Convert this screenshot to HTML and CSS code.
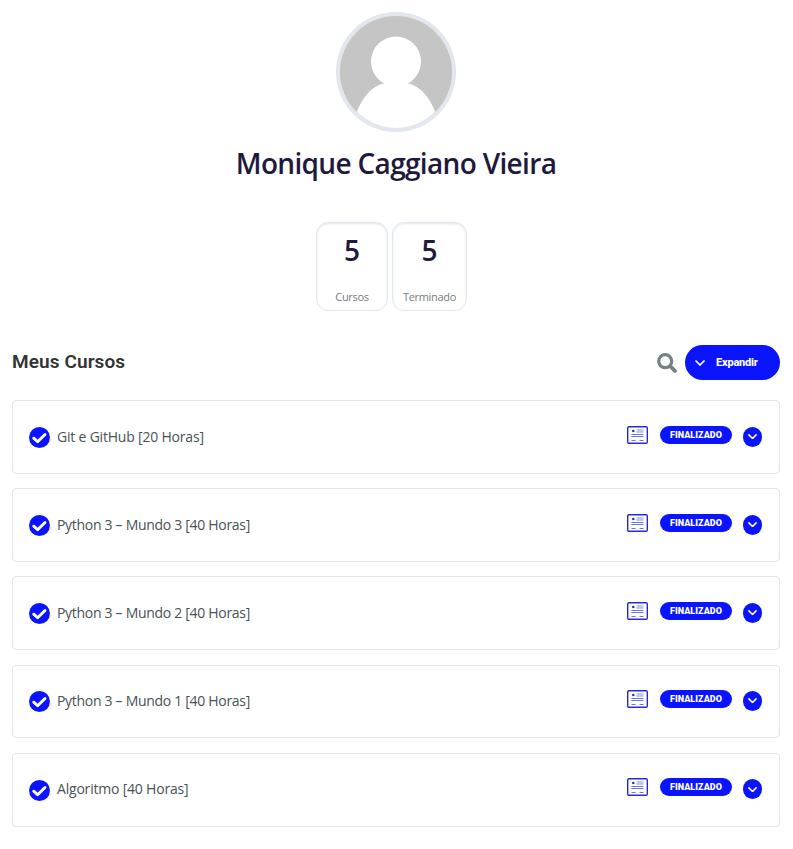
FILE: index.html
```html
<!DOCTYPE html>
<html lang="pt-BR">
<head>
<meta charset="utf-8">
<title>Meus Cursos</title>
<link rel="stylesheet" href="styles.css">
</head>
<body>
<svg width="0" height="0" class="defs">
  <symbol id="check" viewBox="0 0 21 21"><circle cx="10.5" cy="10.5" r="10.5" fill="#0a14ff"/><path d="M4.700 11.200l3.900 3.500 7.400-7.200" fill="none" stroke="#fff" stroke-width="2.900" stroke-linecap="round" stroke-linejoin="round"/></symbol>
  <symbol id="chevron" viewBox="0 0 10 6"><path d="M1 1l4 4 4-4" fill="none" stroke="#fff" stroke-width="1.7" stroke-linecap="round" stroke-linejoin="round"/></symbol>
  <symbol id="cert" viewBox="0 0 21 18"><rect x=".7" y=".7" width="19.600" height="16.600" rx="1.3" fill="#fff" stroke="#2929d2" stroke-width="1.4"/><path d="M9.500 3h7v4h-7z" fill="#bcc5fa"/><circle cx="6.3" cy="5" r="1.2" fill="#2222b8"/><path d="M4.500 8.500h12M4.500 10.500h12" stroke="#6673e0"/><path d="M4.500 14.500h4M12.500 14.500h4" stroke="#6a74dc"/></symbol>
</svg>
<main class="profile">
  <svg class="avatar" viewBox="0 0 120 120"><defs><clipPath id="round"><circle cx="60" cy="60" r="56"/></clipPath></defs><circle cx="60" cy="60" r="60" fill="#e2e7ee"/><g clip-path="url(#round)"><path d="M0 0h120v120H0z" fill="#c5c5c5"/><circle cx="60" cy="49.500" r="25" fill="#fff"/><path d="M18 108C23 91 32 76 47 71.500L60 69l13 2.500C88 76 97 91 102 108v12H18z" fill="#fff"/></g></svg>
  <h1 class="name"><span>Monique Caggiano Vieira</span></h1>
  <div class="stats">
    <div class="stat"><strong>5</strong><span>Cursos</span></div>
    <div class="stat stat-wide"><strong>5</strong><span>Terminado</span></div>
  </div>
  <header class="bar">
    <h2>Meus Cursos</h2>
    <svg class="search" viewBox="0 0 20 20"><circle cx="8.200" cy="8.200" r="6.500" fill="none" stroke="#73808a" stroke-width="3.200"/><path d="M13.200 13.200l4.700 4.700" stroke="#73808a" stroke-width="3.800" stroke-linecap="round"/></svg>
    <button class="expand"><svg><use href="#chevron"/></svg><span>Expandir</span></button>
  </header>
  <div class="list">
    <article class="course"><svg class="check"><use href="#check"/></svg><span class="title short">Git e GitHub [20 Horas]</span><svg class="cert"><use href="#cert"/></svg><span class="tag">FINALIZADO</span><i class="toggle"><svg><use href="#chevron"/></svg></i></article>
    <article class="course"><svg class="check"><use href="#check"/></svg><span class="title">Python 3 – Mundo 3 [40 Horas]</span><svg class="cert"><use href="#cert"/></svg><span class="tag">FINALIZADO</span><i class="toggle"><svg><use href="#chevron"/></svg></i></article>
    <article class="course"><svg class="check"><use href="#check"/></svg><span class="title">Python 3 – Mundo 2 [40 Horas]</span><svg class="cert"><use href="#cert"/></svg><span class="tag">FINALIZADO</span><i class="toggle"><svg><use href="#chevron"/></svg></i></article>
    <article class="course"><svg class="check"><use href="#check"/></svg><span class="title">Python 3 – Mundo 1 [40 Horas]</span><svg class="cert"><use href="#cert"/></svg><span class="tag">FINALIZADO</span><i class="toggle"><svg><use href="#chevron"/></svg></i></article>
    <article class="course"><svg class="check"><use href="#check"/></svg><span class="title short">Algoritmo [40 Horas]</span><svg class="cert"><use href="#cert"/></svg><span class="tag">FINALIZADO</span><i class="toggle"><svg><use href="#chevron"/></svg></i></article>
  </div>
</main>
</body>
</html>
```
FILE: styles.css
```css
* { box-sizing: border-box; }
body { margin: 0; background: #fff; font-family: "Open Sans", sans-serif; }
svg { display: block; flex: none; }
.defs { display: none; }
.profile { padding: 12px 13px 0 12px; display: flex; flex-direction: column; }
.avatar { width: 120px; height: 120px; align-self: center; }
.name { margin: 11px 0 0; height: 40px; font-size: 28px; line-height: 40px; font-weight: 600; color: #1f1a3d; text-align: center; letter-spacing: -0.67px; white-space: nowrap; }
.stats { margin: 39px 0 0 304px; display: flex; gap: 4px; }
.stat { width: 72px; height: 89px; border: 1px solid #e2e7ed; border-radius: 12px; box-shadow: inset 0 1px 3px #e2e7ed; display: flex; flex-direction: column; align-items: center; }
.stat-wide { width: 75px; }
.stat strong { margin-top: 7px; font-size: 28px; line-height: 40px; font-weight: 600; color: #1f1a3d; }
.stat span { margin-top: 19px; font-size: 11px; line-height: 16px; color: #777b80; letter-spacing: -0.3px; }
.bar { margin-top: 34px; height: 35px; display: flex; align-items: center; }
.bar h2 { margin: 0 auto 2px 0; font: 600 19px/24px Roboto, sans-serif; letter-spacing: 0.1px; color: #333; }
.search { width: 20px; height: 20px; margin-right: 8px; }
.expand { width: 95px; height: 35px; padding: 0 0 0 10px; border: 0; border-radius: 18px; background: #0a14ff; color: #fff; display: flex; align-items: center; gap: 11px; font: 800 11px/16px Roboto, sans-serif; letter-spacing: -0.2px; }
.expand svg { width: 10px; height: 6px; }
.list { margin-top: 20px; display: flex; flex-direction: column; gap: 14.4px; }
.course { height: 73.8px; padding: 0 17px 0 16px; border: 1px solid #e4e5e7; border-radius: 4px; display: flex; align-items: center; }
.check { width: 21px; height: 21px; margin: 1px 7px 0 0; }
.title { margin: 0 auto 0.6px 0; font-size: 14px; line-height: 20px; color: #495255; letter-spacing: -0.3px; }
.title.short { letter-spacing: -0.2px; }
.cert { width: 21px; height: 18px; margin: -4.4px 12px 0 0; }
.tag { width: 72px; height: 18px; margin: -4.4px 11px 0 0; border-radius: 9px; background: #0a14ff; color: #fff; font: 900 9px/18px Roboto, sans-serif; letter-spacing: 0.05px; text-align: center; }
.toggle { width: 19px; height: 20px; margin-bottom: 0.6px; border-radius: 10px; background: #0a14ff; display: flex; align-items: center; justify-content: center; }
.toggle svg { width: 9px; height: 5.4px; }
```
